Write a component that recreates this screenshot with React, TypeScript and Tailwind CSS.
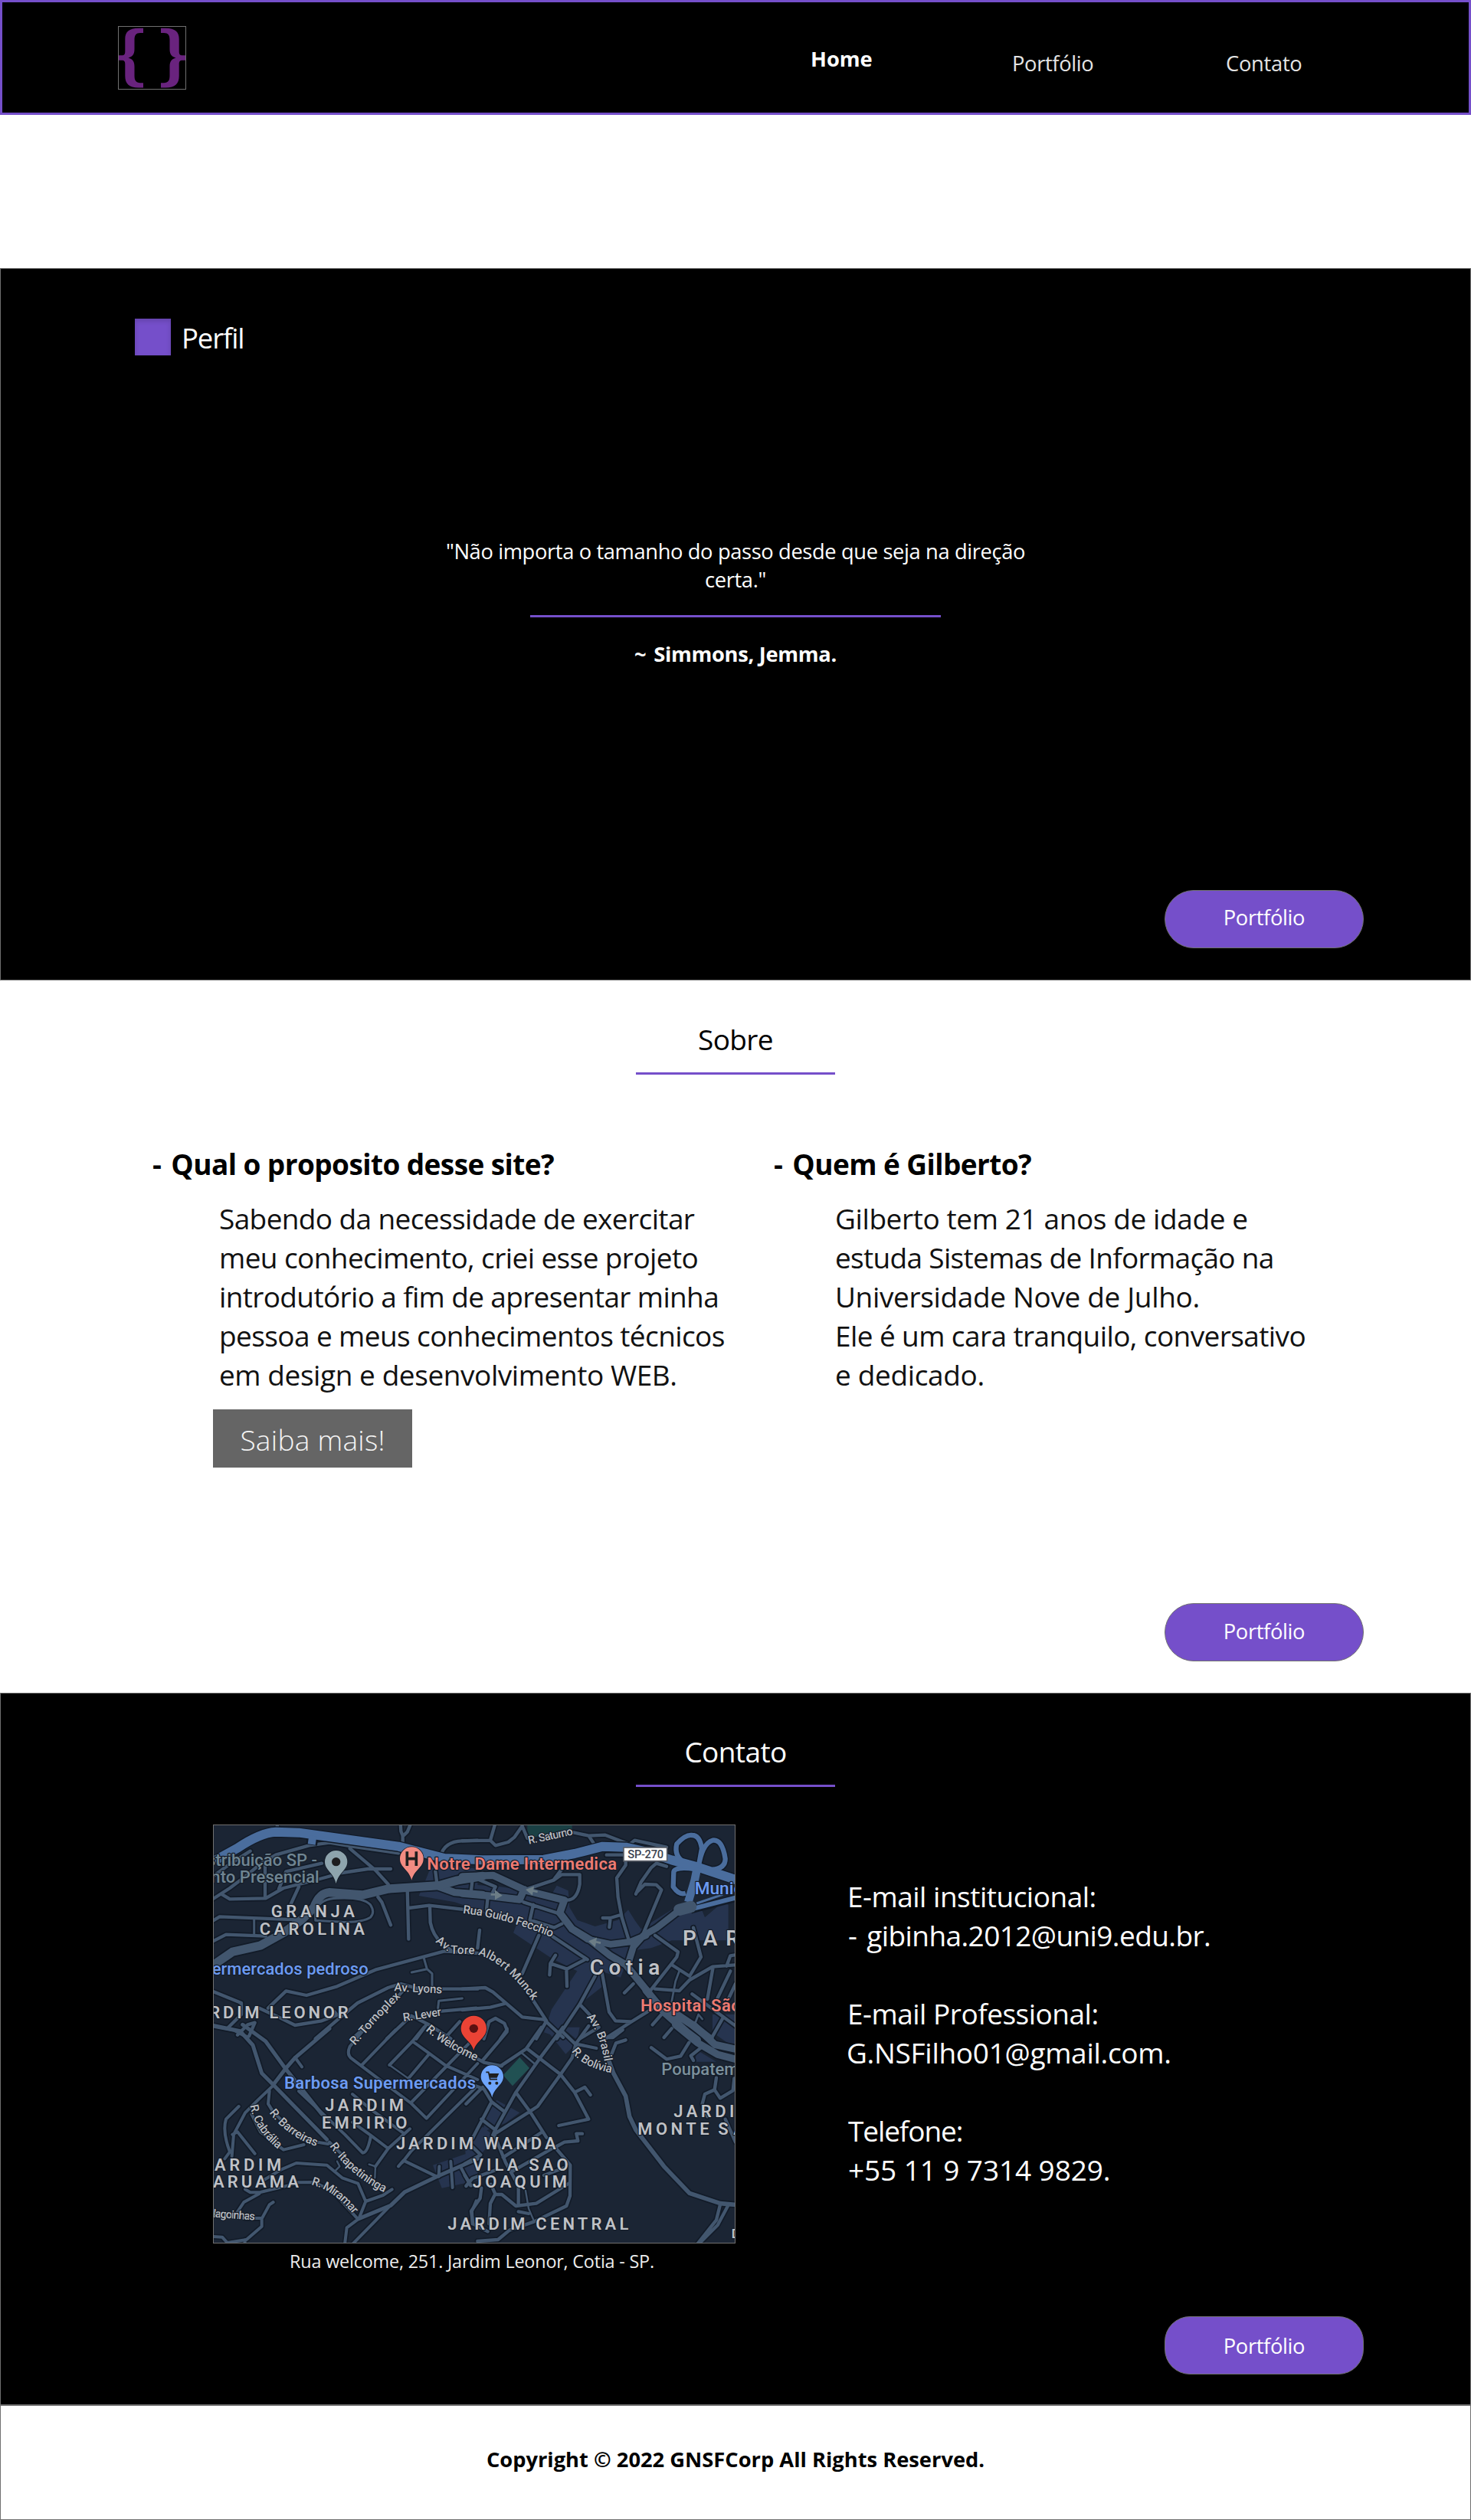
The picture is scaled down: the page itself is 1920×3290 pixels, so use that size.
import type { ReactNode } from "react";

type Road = [width: number, ...paths: string[]];
type Tile = { x: number; y: number; roads: Road[] };

/* ---------- Map data: one tile per quadrant of the map ---------- */

const tiles: Tile[] = [
  {
    x: -54,
    y: -66,
    roads: [
      [
        13,
        "M50 360 L120 315 L180 270 L240 220 L300 185 L430 148 L510 137 L600 152 L780 178",
        "M50 272 L110 228 L140 208 L200 170",
        "M90 340 L120 358 L260 355 L330 315 L440 288 L560 255 L660 240 L750 240",
        "M258 355 L258 220",
        "M312 318 L340 250 L480 218",
        "M590 160 L690 245 L740 300",
        "M390 310 L360 375 L345 410",
        "M700 350 L715 370 L750 460",
        "M815 320 L820 515",
        "M820 393 L900 383 L1090 405",
        "M903 385 L905 450 Q915 500 950 530 L985 558",
        "M50 445 L80 427 L400 440",
        "M50 525 L105 497 L260 503",
        "M270 785 L340 718 L420 735 L540 700 L690 635 L960 562 L1090 570",
        "M50 718 L165 765 L165 810 L110 865",
        "M235 785 L300 815 L375 852 L480 835 L540 812 L530 800",
        "M455 905 L540 832 L620 765 L740 705 L790 690 L860 710 L1090 710",
        "M50 855 L140 873 L190 900",
        "M945 190 Q960 132 1030 130 L1090 128",
        "M788 60 L790 92 L797 110 L797 140",
        "M827 66 L815 95 L797 112",
        "M305 66 L308 92",
        "M925 250 L932 305",
        "M950 797 L1085 785",
        "M800 715 L750 770 L600 905",
        "M735 905 L830 815 L900 850 L985 905",
        "M850 905 L890 850",
        "M960 905 L1020 838",
        "M150 890 L190 850 L218 842 L195 895",
      ],
      [
        9,
        "M540 355 Q640 350 670 380 Q690 410 670 430 Q640 450 560 448 L455 442 L455 400 Q480 355 540 355",
        "M880 590 L892 632 L912 650 L912 700",
        "M832 645 L892 632",
        "M935 785 L938 757 L1030 747",
        "M215 435 L215 500",
      ],
      [28, "M940 310 L1000 332 L1110 340"],
      [34, "M50 620 L130 565 L240 540 L330 490 L400 440 L450 390 Q470 335 510 332 L640 342 L740 318 L860 310 L940 305 L1010 285 L1110 268"],
    ],
  },
  {
    x: 996,
    y: -66,
    roads: [
      [
        13,
        "M-20 130 L90 128 L108 66",
        "M90 128 L110 148 L160 135 L185 115 L215 72 L235 120",
        "M415 97 L475 110 L540 107 L630 142",
        "M475 110 L495 140",
        "M640 140 L655 128 L780 155",
        "M545 185 L615 185",
        "M620 205 L620 225 L585 275 L590 350 L605 430 L632 518",
        "M530 432 L560 432 L600 420",
        "M560 432 L556 468",
        "M780 230 L740 218 L720 235 L680 292 L660 338",
        "M665 330 L695 300 L740 302 L760 322 L690 490",
        "M215 325 L340 283 L370 262 L440 262 L440 300 Q430 362 390 362",
        "M340 280 L372 238",
        "M20 280 L15 325",
        "M40 280 L110 310 L100 330",
        "M80 350 L75 400",
        "M220 370 L360 415",
        "M258 380 L245 440 L340 470 L370 455",
        "M335 505 L470 595",
        "M280 500 L215 650",
        "M345 578 L325 610 L322 655",
        "M325 610 L390 632 L460 595",
        "M388 632 L390 700",
        "M48 480 L40 550",
        "M528 650 L555 800 L580 835 L640 838",
        "M500 660 L440 770 L350 905",
        "M-20 710 L70 705 L100 722 L215 820 L300 830 L375 900",
        "M-20 792 L90 782 L145 768",
        "M235 720 L310 835 L270 905",
        "M65 905 L85 838 L110 825 L145 845 L155 870 L130 905",
        "M440 770 L480 812 L515 860 L440 905",
        "M540 905 L640 840 L720 790",
        "M735 500 L825 565 L820 585 L710 725",
        "M735 710 L830 717 L870 675 L960 623 L1060 615",
        "M885 470 L915 585 L870 660 L800 615",
        "M962 625 L940 750",
        "M1060 575 L1030 580 L1015 620",
        "M1030 640 L980 745",
        "M1050 690 L1022 750",
        "M650 690 L615 725",
        "M725 850 L760 810",
        "M880 730 L1060 862",
        "M1000 825 L955 905",
      ],
      [8, "M830 640 L815 680 L800 760", "M890 850 L905 810 L920 828"],
      [28, "M-20 336 L80 345 L205 360 L222 320", "M-20 270 L100 265 L230 325 L380 362 L362 412 L410 475 L480 517 L560 580 L620 615 L710 725"],
      [26, "M410 475 L470 515 L560 535 L640 525 L700 500", "M870 385 L830 402 L740 472 L690 500 L650 545 L630 610"],
      [30, "M700 715 L770 800 L860 880 L900 910", "M790 790 L880 850 L950 905"],
    ],
  },
  {
    x: -54,
    y: 804,
    roads: [
      [
        15,
        "M40 -20 L160 5 L210 60 L245 170 L290 215 L500 430",
        "M170 -20 L260 45 L340 155 L480 330",
        "M290 215 L340 150 L375 110 L510 -5",
        "M625 740 L750 688 L805 635 L930 575 L1090 505",
      ],
      [
        12,
        "M375 108 L402 145",
        "M290 218 L230 275 L180 325 L135 410 L128 495",
        "M155 300 L105 350 Q90 400 120 478 L100 505",
        "M130 410 L150 400 L218 485",
        "M275 240 L270 290 L290 322 L400 430 L505 447",
        "M205 330 L240 400 L330 470 L410 450",
        "M390 240 L570 410 L640 482 Q660 482 672 415",
        "M510 440 L600 530 L720 632",
        "M755 625 L720 648 L652 672 L622 602 L560 580 L500 530 L380 522 L320 548 L250 590",
        "M652 672 L625 740 L578 775 L570 840",
        "M745 692 L600 840",
        "M385 598 L450 597 L520 630 L620 740",
        "M180 625 L200 637 L240 636 L370 605",
        "M235 642 L175 675 L145 720",
        "M290 675 L275 685 L245 740 L245 770 L185 822 L110 834 L90 812 L50 810",
        "M180 738 L245 738",
        "M180 822 L178 840",
        "M780 535 L800 512 L930 575",
        "M795 520 L830 475 L1080 228",
        "M640 5 L590 65 Q575 100 600 115 L830 288 L890 347 L1090 132",
        "M635 140 L770 0",
        "M745 138 L835 45 L880 -10",
        "M835 45 L900 92 L965 140 L1090 195",
        "M830 285 L1020 90 L1080 30",
        "M820 190 L900 95",
        "M600 252 L670 310 L800 405",
        "M600 362 L670 412 L740 465 L825 388",
        "M740 465 L690 535",
        "M940 535 L938 575",
        "M985 515 L992 618",
        "M1025 540 L1062 610",
        "M1085 670 L1068 710 L1070 760",
      ],
      [7, "M745 138 L815 188", "M690 535 L688 580", "M665 527 L690 535", "M540 515 L550 535 L535 550"],
    ],
  },
  {
    x: 996,
    y: 804,
    roads: [
      [
        13,
        "M-20 80 L65 128 L135 142",
        "M155 -5 L155 8 L60 120",
        "M130 142 L230 75 L290 -10",
        "M375 -10 L285 110 L190 245 L110 390 L100 412",
        "M20 215 L65 232 L95 282 L20 425",
        "M60 225 L-5 290",
        "M95 282 L145 320",
        "M55 350 L110 392",
        "M100 412 L245 320 L275 300 L365 175 L410 110 L425 55 L475 -15",
        "M190 245 L245 320 L310 422",
        "M235 75 L365 175 L420 245 L475 350 L358 375",
        "M420 245 L460 225 L482 255",
        "M370 5 L422 55 L505 72",
        "M540 30 L570 30 L608 0",
        "M565 95 L582 52 L620 40",
        "M720 70 L780 115 L835 103 L868 50",
        "M770 30 L800 -5",
        "M915 70 L875 102 L885 120",
        "M975 188 L968 235 L990 268 L1040 238 L1045 190",
        "M968 235 L930 252 L920 290 L940 340",
        "M1010 350 L1050 440",
        "M990 685 L975 745 L900 840",
        "M1020 690 L980 765 L905 840",
        "M105 410 L150 520 L200 610 L200 685",
        "M350 468 L403 530 L402 650 L388 690 L260 752 L165 785 L120 822 L40 828",
        "M340 462 L380 440 L433 435 L427 407 L450 407",
        "M140 500 L290 402",
        "M175 555 L340 460",
        "M20 458 L52 490 L-10 525",
        "M110 550 L20 582 L-5 612",
        "M55 620 L50 660 L15 710 L22 760 L80 790",
        "M85 760 L90 680 L108 645 L135 645 L190 690 L270 680 L400 600",
        "M200 712 L240 720",
        "M110 645 L92 605",
        "M300 570 L380 540",
        "M-10 570 L15 610",
      ],
      [7, "M212 90 L262 132", "M228 630 L240 700 L262 752"],
      [17, "M548 105 L572 170 L620 260 L635 340 L660 392 L770 535 L870 640 L990 680 L1060 686"],
      [28, "M815 -20 L900 50 L980 97 L1060 118", "M885 -20 L970 58 L1060 78"],
    ],
  },
];

/** Draws every street twice, first as a dark casing and then as the lighter surface. */
function Roads() {
  const layer = (stroke: string, extra: number) =>
    tiles.map((t) => (
      <g key={`${stroke}${t.x}${t.y}`} transform={`translate(${t.x} ${t.y})`}>
        {t.roads.map(([w, ...paths]) => (
          <path key={paths[0]} d={paths.join(" ")} stroke={stroke} strokeWidth={w + extra} />
        ))}
      </g>
    ));
  return (
    <g fill="none" strokeLinecap="round" strokeLinejoin="round">
      {layer("#121b28", 10)}
      {layer("#42566e", 0)}
    </g>
  );
}

function Highway() {
  const d =
    "M60 208 L150 158 Q240 98 300 95 L390 98 L780 152 L870 175 L960 198 L1110 205 L1350 203 L1470 180 L1580 152 L1670 155 L1760 175 L1850 205 L1950 232 L2110 285";
  const loops =
    "M1955 232 L1968 160 Q1960 108 1930 108 Q1905 104 1870 142 Q1858 190 1900 215 L1950 238 M1955 232 Q1970 140 2010 128 Q2048 122 2060 200 Q2060 238 2010 242 M1940 240 Q1862 230 1858 252 L1856 310 Q1880 345 1905 335";
  return (
    <g transform="translate(-54 -66)" fill="none" strokeLinejoin="round">
      <path d={`${d} M445 110 L440 146`} stroke="#121b28" strokeWidth="44" />
      <path d={loops} stroke="#121b28" strokeWidth="28" />
      <path d="M1925 400 L2110 352" stroke="#121b28" strokeWidth="30" />
      <path d={loops} stroke="#4a6d9d" strokeWidth="19" />
      <path d="M1925 398 L2110 350" stroke="#4a6d9d" strokeWidth="18" />
      <path d="M1948 375 L2050 340" stroke="#4a6d9d" strokeWidth="9" />
      <path d={d} stroke="#4a6d9d" strokeWidth="36" />
      <path d="M445 110 L440 144" stroke="#4a6d9d" strokeWidth="30" />
      <path d="M1950 235 L1940 285 L1915 370" stroke="#4a6d9d" strokeWidth="32" />
      <path d="M1880 400 L1925 388" stroke="#42566e" strokeWidth="46" strokeLinecap="round" />
    </g>
  );
}

type LabelProps = {
  x: number;
  y: number;
  size?: number;
  len?: number;
  color?: string;
  weight?: number;
  rotate?: number;
  children: string;
};

function Label({ x, y, size = 66, len, color = "#bfc1c6", weight = 600, rotate, children }: LabelProps) {
  return (
    <text
      x={x}
      y={y}
      fontSize={size}
      fontWeight={weight}
      fill={color}
      textLength={len}
      lengthAdjust="spacing"
      transform={rotate ? `rotate(${rotate} ${x} ${y})` : undefined}
    >
      {children}
    </text>
  );
}

function StreetLabel({ id, d, len, children }: { id: string; d: string; len: number; children: string }) {
  return (
    <>
      <path id={id} d={d} fill="none" stroke="none" />
      <text fontSize="46" fontWeight="500" fill="#b9bcc1" textLength={len} lengthAdjust="spacing">
        <textPath href={`#${id}`}>{children}</textPath>
      </text>
    </>
  );
}

function Pin({ x, y, r, tip, fill, children }: { x: number; y: number; r: number; tip: number; fill: string; children?: ReactNode }) {
  const d = `M${-r} 0 A${r} ${r} 0 1 1 ${r} 0 C${r} ${r * 0.75} ${r * 0.2} ${r * 0.95} 0 ${tip} C${-r * 0.2} ${r * 0.95} ${-r} ${r * 0.75} ${-r} 0 Z`;
  return (
    <g transform={`translate(${x} ${y})`}>
      <path d={d} fill={fill} stroke="#151d29" strokeWidth="5" paintOrder="stroke" />
      {children}
    </g>
  );
}

const SALMON = "#ee7b72";
const BLUE = "#6c9bf2";
const SLATE = "#6f8592";

function CityMap() {
  return (
    <svg
      viewBox="3 3 2040 1635"
      preserveAspectRatio="none"
      className="block h-[547px] w-[682px] border border-[#707070] bg-[#1b2534] font-['Roboto']"
    >
      <g fill="#26344f">
        <g transform="translate(-54 -66)">
          <path d="M880 300 L900 250 L930 220 L1090 240 L1090 400 L1000 370 L860 345 Z" />
        </g>
        <g transform="translate(996 -66)">
          <path d="M0 300 L130 310 L330 340 L350 305 L395 325 L400 390 L430 440 L500 465 L590 440 L630 400 L655 440 L680 475 L800 400 L920 405 L930 430 L1000 370 L1022 380 L1022 520 L800 520 L720 550 L640 560 L600 665 L520 640 L530 700 L440 770 L370 905 L300 880 L330 790 L430 640 L330 590 L180 490 L200 440 L0 400 Z" />
        </g>
        <g transform="translate(-54 804)">
          <path d="M915 530 L1090 470 L1090 590 L950 620 Z" />
        </g>
        <g transform="translate(996 804)">
          <path d="M310 0 L350 0 L420 60 L385 95 Z" />
          <path d="M115 275 L205 325 L150 365 L60 400 L80 320 Z" />
          <path d="M60 380 L110 420 L60 480 L0 575 L-10 450 Z" />
          <path d="M960 -60 L1060 -60 L1060 80 L960 10 Z" />
          <path d="M900 80 L975 125 L890 125 Z" />
          <path d="M370 -10 L440 -10 L430 40 Z" />
        </g>
      </g>
      <g transform="translate(996 -66)">
        <path d="M235 60 L410 60 L410 90 L235 120 Z" fill="#1a4044" />
      </g>

      <Roads />
      <Highway />

      <g transform="translate(996 804)">
        <path d="M205 108 L243 150 L177 220 L140 178 Z" fill="#215153" />
      </g>

      {/* One-way arrows */}
      <g transform="translate(996 -66)" stroke="#6c7d86" strokeWidth="8" fill="#6c7d86">
        <path d="M92 340 H115 M112 330 L130 344 L112 354 Z" />
        <path d="M275 330 L255 325 M256 314 L236 322 L252 336 Z" />
        <path d="M522 530 L500 525 M502 515 L482 524 L498 538 Z" />
      </g>

      <g stroke="#151d29" strokeWidth="7" strokeLinejoin="round" paintOrder="stroke">
        <g transform="translate(-54 -66)">
          <Label x={30} y={228} size={66} len={432} color={SLATE} weight={500}>stribuição SP -</Label>
          <Label x={46} y={293} size={66} len={424} color={SLATE} weight={500}>nto Presencial</Label>
          <Label x={281} y={430} len={328}>GRANJA</Label>
          <Label x={236} y={497} len={412}>CAROLINA</Label>
          <Label x={892} y={244} size={66} len={743} color={SALMON}>Notre Dame Intermedica</Label>
          <Label x={50} y={653} size={66} len={612} color={BLUE} weight={500}>ermercados pedroso</Label>
          <Label x={40} y={826} len={544}>RDIM LEONOR</Label>
          <Label x={763} y={718} size={46} len={188} color="#b9bcc1" weight={500} rotate={3}>Av. Lyons</Label>
          <Label x={800} y={838} size={46} len={152} color="#b9bcc1" weight={500} rotate={-9}>R. Lever</Label>
          <StreetLabel id="st-tornoplex" d="M610 932 L700 830 L800 730" len={262}>R. Tornoplex</StreetLabel>
          <StreetLabel id="st-welcome" d="M886 872 Q970 945 1100 1000" len={232}>R. Welcome</StreetLabel>
          <StreetLabel id="st-tore" d="M924 526 L985 572 L1085 574 Q1190 600 1300 750" len={468}>Av. Tore Albert Munck</StreetLabel>
          <StreetLabel id="st-guido" d="M1032 414 Q1200 430 1400 516" len={362}>Rua Guido Fecchio</StreetLabel>
        </g>
        <g transform="translate(996 -66)">
          <Label x={241} y={143} size={44} len={178} color="#b9bcc1" weight={500} rotate={-12}>R. Saturno</Label>
          <Label x={890} y={338} size={68} color={BLUE} weight={500}>Municipal</Label>
          <Label x={843} y={541} size={84} len={222}>PAR</Label>
          <Label x={479} y={655} size={84} len={275}>Cotia</Label>
          <Label x={678} y={799} size={66} len={392} color={SALMON}>Hospital São</Label>
          <StreetLabel id="st-brasil" d="M466 822 Q515 870 538 1000" len={190}>Av. Brasil</StreetLabel>
        </g>
        <g transform="translate(-54 804)">
          <Label x={333} y={231} size={66} len={750} color={BLUE}>Barbosa Supermercados</Label>
          <Label x={493} y={318} len={308}>JARDIM</Label>
          <Label x={480} y={386} len={334}>EMPIRIO</Label>
          <Label x={771} y={468} len={626}>JARDIM WANDA</Label>
          <Label x={60} y={551} len={262}>ARDIM</Label>
          <Label x={54} y={618} len={336}>ARUAMA</Label>
          <Label x={973} y={784} len={708}>JARDIM CENTRAL</Label>
          <Label x={54} y={734} size={44} len={164} color="#b9bcc1" weight={500} rotate={4}>lagoinhas</Label>
          <StreetLabel id="st-cabralia" d="M199 296 Q215 400 330 484" len={208}>R. Cabrália</StreetLabel>
          <StreetLabel id="st-barreiras" d="M274 325 Q350 425 475 462" len={230}>R. Barreiras</StreetLabel>
          <StreetLabel id="st-itapetininga" d="M510 455 Q595 578 740 645" len={284}>R. Itapetininga</StreetLabel>
          <StreetLabel id="st-miramar" d="M438 606 Q540 635 612 735" len={205}>R. Miramar</StreetLabel>
        </g>
        <g transform="translate(996 804)">
          <Label x={20} y={551} len={375}>VILA SAO</Label>
          <Label x={20} y={618} len={370}>JOAQUIM</Label>
          <Label x={808} y={342} len={308}>JARDIM</Label>
          <Label x={667} y={410} len={280}>MONTE</Label>
          <Label x={982} y={410} len={104}>SA</Label>
          <Label x={760} y={178} size={66} color="#7b909c" weight={500}>Poupatempo</Label>
          <Label x={1034} y={816} size={50}>D</Label>
          <StreetLabel id="st-bolivia" d="M408 84 Q450 150 580 172" len={182}>R. Bolívia</StreetLabel>
        </g>
      </g>

      {/* Road shield */}
      <g transform="translate(996 -66)">
        <rect x="612" y="156" width="170" height="53" fill="#fff" stroke="#5a5f68" strokeWidth="5" />
        <text x="628" y="198" fontSize="44" fontWeight="500" textLength="140" fill="#3c4350">SP-270</text>
      </g>

      {/* Places */}
      <Pin x={482} y={146} r={44} tip={86} fill="#8ea4ad">
        <circle r="17" fill="#1d1d1f" />
      </Pin>
      <Pin x={778} y={134} r={46} tip={84} fill="#f28b82">
        <path d="M-18 -28 V28 M18 -28 V28 M-18 0 H18" stroke="#1f1f1f" strokeWidth="11" fill="none" />
      </Pin>
      <Pin x={1021} y={799} r={50} tip={86} fill="#ea4335">
        <circle r="17" fill="#5c1111" />
      </Pin>
      <Pin x={1093} y={987} r={44} tip={82} fill="#6ea5fc">
        <path d="M-24 -17 H-14 L-8 11 H20" stroke="#1f1f1f" strokeWidth="5" fill="none" />
        <path d="M-13 -12 H27 L19 5 H-8 Z" fill="#1f1f1f" />
        <circle cx="-9" cy="26" r="6" fill="#1f1f1f" />
        <circle cx="18" cy="26" r="6" fill="#1f1f1f" />
      </Pin>
    </svg>
  );
}

/* ---------- Page ---------- */

const BRACE =
  "M33 2.7 H27 C14 2.7 9.3 8 9.3 17 V33 C9.3 37 8 38.3 5 38.3 H1 V44.7 H5 C8 44.7 9.3 46 9.3 50 V65 C9.3 75 14 80.5 27 80.5 H33 V74.2 H29 C23.5 74.2 21.5 71 21.5 65 V53 C21.5 46 19 43 13.5 41.5 C19 40 21.5 37 21.5 30 V18 C21.5 12 23.5 9 29 9 H33 Z";

function Logo() {
  return (
    <div className="h-[83px] w-[89px] border border-[#707070] bg-black">
      <svg viewBox="1 1 87 81" className="block h-full w-full">
        <path d={BRACE} fill="#69237e" />
        <path d={BRACE} fill="#69237e" transform="translate(89 0) scale(-1 1)" />
      </svg>
    </div>
  );
}

function PortfolioButton({ className }: { className: string }) {
  return (
    <a
      href="#portfolio"
      className={`mt-auto block h-[76px] w-[260px] self-end border border-[#707070] bg-[#754fca] text-center text-[27.3px] leading-[37px] tracking-[-0.35px] text-white ${className}`}
    >
      Portfólio
    </a>
  );
}

function SectionTitle({ children }: { children: string }) {
  return (
    <h2 className="mx-auto h-[72px] w-[260px] border-b-[3px] border-[#754fca] text-center text-[37px] leading-[51px] tracking-[-0.6px]">
      {children}
    </h2>
  );
}

export default function App() {
  return (
    <div className="flex h-[3290px] w-[1920px] flex-col bg-white font-['Open_Sans',sans-serif] text-black">
      <header className="flex h-[150px] items-start border-[3px] border-[#754fca] bg-black text-[27.3px] leading-[37px] text-white">
        <div className="ml-[151px] mt-[31px]">
          <Logo />
        </div>
        <nav className="ml-[815px] flex items-start">
          <a href="#home" className="mt-[55px] w-[263px] font-bold">Home</a>
          <a href="#portfolio" className="mt-[61px] w-[279px] tracking-[-0.35px] text-[#e4e4e4]">Portfólio</a>
          <a href="#contato" className="mt-[61px] tracking-[-0.27px] text-[#e4e4e4]">Contato</a>
        </nav>
      </header>

      <section className="mt-[200px] flex h-[930px] flex-col border border-[#707070] bg-black text-white">
        <div className="ml-[175px] mt-[65px] flex">
          <div className="h-12 w-[47px] bg-[#754fca] shadow-[inset_0_3px_6px_rgba(0,0,0,0.16)]" />
          <h1 className="ml-[14px] mt-px text-[36.5px] leading-[48px] tracking-[-1.1px]">Perfil</h1>
        </div>
        <blockquote className="mx-auto mt-[236px] text-center text-[27.3px] leading-[37px] tracking-[-0.37px]">
          "Não importa o tamanho do passo desde que seja na direção
          <br />
          certa."
        </blockquote>
        <div className="mx-auto mt-7 h-[2.5px] w-[536px] bg-[#754fca]" />
        <p className="mx-auto mt-[29px] text-[27.3px] font-bold leading-[37px] tracking-[-0.3px]">
          <span className="mr-[3px]">~</span> Simmons, Jemma.
        </p>
        <PortfolioButton className="mb-[41px] mr-[139px] rounded-[38px] pt-4" />
      </section>

      <section className="flex h-[930px] flex-col pt-[51px]">
        <SectionTitle>Sobre</SectionTitle>
        <div className="mt-[91px] flex text-[37px] leading-[51px]">
          <article className="ml-[199px] w-[811px]">
            <h3 className="font-bold tracking-[-0.58px]">
              <span className="mr-1">-</span> Qual o proposito desse site?
            </h3>
            <p className="ml-[87px] mt-5 whitespace-nowrap text-[#111]">
              <span className="block tracking-[-0.62px]">Sabendo da necessidade de exercitar</span>
              <span className="block tracking-[-0.6px]">meu conhecimento, criei esse projeto</span>
              <span className="block tracking-[-0.65px]">introdutório a fim de apresentar minha</span>
              <span className="block tracking-[-0.6px]">pessoa e meus conhecimentos técnicos</span>
              <span className="block tracking-[-0.43px]">em design e desenvolvimento WEB.</span>
            </p>
            <a
              href="#sobre"
              className="ml-[79px] mt-5 block h-[76px] w-[260px] bg-[#656565] pt-[14px] text-center font-light tracking-[0.27px] text-[#f4f4f4]"
            >
              Saiba mais!
            </a>
          </article>
          <article>
            <h3 className="font-bold tracking-[-0.58px]">
              <span className="mr-1">-</span> Quem é Gilberto?
            </h3>
            <p className="ml-20 mt-5 whitespace-nowrap text-[#111]">
              <span className="block tracking-[-0.4px]">Gilberto tem 21 anos de idade e</span>
              <span className="block tracking-[-0.68px]">estuda Sistemas de Informação na</span>
              <span className="block tracking-[-0.35px]">Universidade Nove de Julho.</span>
              <span className="block tracking-[-0.6px]">Ele é um cara tranquilo, conversativo</span>
              <span className="block tracking-[-0.35px]">e dedicado.</span>
            </p>
          </article>
        </div>
        <PortfolioButton className="mb-[41px] mr-[140px] rounded-[38px] pt-[17px]" />
      </section>

      <section className="flex h-[930px] flex-col border border-[#707070] bg-black pt-[50px] text-white">
        <SectionTitle>Contato</SectionTitle>
        <div className="mt-[49px] flex">
          <figure className="ml-[277px] w-[682px]">
            <CityMap />
            <figcaption className="mt-[7px] pr-1.5 text-center text-[23.4px] leading-8 tracking-[-0.2px] text-[#ececec]">
              Rua welcome, 251. Jardim Leonor, Cotia - SP.
            </figcaption>
          </figure>
          <address className="ml-[145px] mt-[68px] flex flex-col gap-[51px] whitespace-nowrap text-[37px] not-italic leading-[51px]">
            <p>
              <span className="block pl-px tracking-[-0.5px]">E-mail institucional:</span>
              <span className="block pl-0.5 tracking-[-0.6px]">
                <span className="mr-1">-</span> gibinha.2012@uni9.edu.br.
              </span>
            </p>
            <p>
              <span className="block pl-px tracking-[-0.5px]">E-mail Professional:</span>
              <span className="block tracking-[-0.3px]">G.NSFilho01@gmail.com.</span>
            </p>
            <p>
              <span className="block pl-0.5 tracking-[-1.1px]">Telefone:</span>
              <span className="block pl-0.5 tracking-[-0.1px]">+55 11 9 7314 9829.</span>
            </p>
          </address>
        </div>
        <PortfolioButton className="mb-[39px] mr-[139px] rounded-[33px] pt-[19px]" />
      </section>

      <footer className="flex h-[150px] items-start justify-center border border-[#707070] pt-[51px]">
        <p className="text-[27.3px] font-bold leading-[37px]">Copyright © 2022 GNSFCorp All Rights Reserved.</p>
      </footer>
    </div>
  );
}
